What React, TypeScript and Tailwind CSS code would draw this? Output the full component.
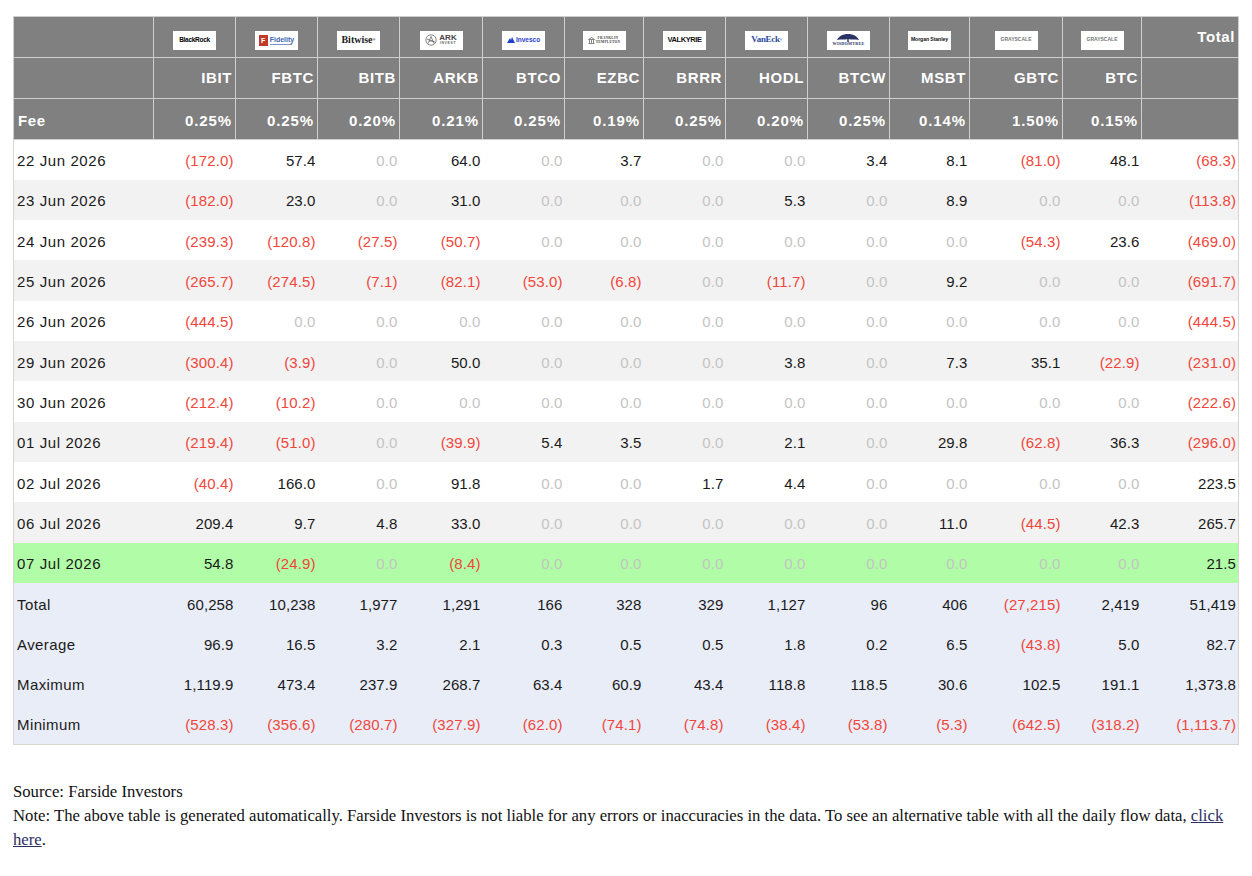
import React from "react";

type Cell = string;

const tickers = ["IBIT", "FBTC", "BITB", "ARKB", "BTCO", "EZBC", "BRRR", "HODL", "BTCW", "MSBT", "GBTC", "BTC"];
const fees = ["0.25%", "0.25%", "0.20%", "0.21%", "0.25%", "0.19%", "0.25%", "0.20%", "0.25%", "0.14%", "1.50%", "0.15%"];
const widths = ["w-[140px]", "w-[82px]", "w-[82px]", "w-[82px]", "w-[83px]", "w-[82px]", "w-[79px]", "w-[82px]", "w-[82px]", "w-[82px]", "w-[80px]", "w-[93px]", "w-[79px]", "w-[97px]"];

const Z = "0.0";
const rows: { date: string; vals: Cell[]; green?: boolean }[] = [
  { date: "22 Jun 2026", vals: ["(172.0)", "57.4", Z, "64.0", Z, "3.7", Z, Z, "3.4", "8.1", "(81.0)", "48.1", "(68.3)"] },
  { date: "23 Jun 2026", vals: ["(182.0)", "23.0", Z, "31.0", Z, Z, Z, "5.3", Z, "8.9", Z, Z, "(113.8)"] },
  { date: "24 Jun 2026", vals: ["(239.3)", "(120.8)", "(27.5)", "(50.7)", Z, Z, Z, Z, Z, Z, "(54.3)", "23.6", "(469.0)"] },
  { date: "25 Jun 2026", vals: ["(265.7)", "(274.5)", "(7.1)", "(82.1)", "(53.0)", "(6.8)", Z, "(11.7)", Z, "9.2", Z, Z, "(691.7)"] },
  { date: "26 Jun 2026", vals: ["(444.5)", Z, Z, Z, Z, Z, Z, Z, Z, Z, Z, Z, "(444.5)"] },
  { date: "29 Jun 2026", vals: ["(300.4)", "(3.9)", Z, "50.0", Z, Z, Z, "3.8", Z, "7.3", "35.1", "(22.9)", "(231.0)"] },
  { date: "30 Jun 2026", vals: ["(212.4)", "(10.2)", Z, Z, Z, Z, Z, Z, Z, Z, Z, Z, "(222.6)"] },
  { date: "01 Jul 2026", vals: ["(219.4)", "(51.0)", Z, "(39.9)", "5.4", "3.5", Z, "2.1", Z, "29.8", "(62.8)", "36.3", "(296.0)"] },
  { date: "02 Jul 2026", vals: ["(40.4)", "166.0", Z, "91.8", Z, Z, "1.7", "4.4", Z, Z, Z, Z, "223.5"] },
  { date: "06 Jul 2026", vals: ["209.4", "9.7", "4.8", "33.0", Z, Z, Z, Z, Z, "11.0", "(44.5)", "42.3", "265.7"] },
  { date: "07 Jul 2026", vals: ["54.8", "(24.9)", Z, "(8.4)", Z, Z, Z, Z, Z, Z, Z, Z, "21.5"], green: true },
];

const summary: { label: string; vals: Cell[] }[] = [
  { label: "Total", vals: ["60,258", "10,238", "1,977", "1,291", "166", "328", "329", "1,127", "96", "406", "(27,215)", "2,419", "51,419"] },
  { label: "Average", vals: ["96.9", "16.5", "3.2", "2.1", "0.3", "0.5", "0.5", "1.8", "0.2", "6.5", "(43.8)", "5.0", "82.7"] },
  { label: "Maximum", vals: ["1,119.9", "473.4", "237.9", "268.7", "63.4", "60.9", "43.4", "118.8", "118.5", "30.6", "102.5", "191.1", "1,373.8"] },
  { label: "Minimum", vals: ["(528.3)", "(356.6)", "(280.7)", "(327.9)", "(62.0)", "(74.1)", "(74.8)", "(38.4)", "(53.8)", "(5.3)", "(642.5)", "(318.2)", "(1,113.7)"] },
];

function colorFor(v: string, isTotalCol: boolean) {
  if (v.startsWith("(")) return "text-[#f0463b]";
  if (v === Z && !isTotalCol) return "text-[#c4c4c4]";
  return "text-[#1a1a1a]";
}

function LogoBox({ children }: { children: React.ReactNode }) {
  return (
    <div className="mx-auto flex h-[19px] w-[43px] items-center justify-center overflow-hidden bg-white">
      {children}
    </div>
  );
}

function Logo({ i }: { i: number }) {
  switch (i) {
    case 0:
      return (
        <LogoBox>
          <span className="text-[6.5px] font-bold tracking-[-0.3px] text-black [font-family:'Liberation_Sans',sans-serif]">BlackRock</span>
        </LogoBox>
      );
    case 1:
      return (
        <LogoBox>
          <div className="flex items-center gap-[2px]">
            <div className="flex h-[11px] w-[9px] items-center justify-center bg-[#c0392b] text-[7px] font-bold leading-none text-white">F</div>
            <div className="flex flex-col leading-none">
              <span className="text-[7px] font-bold text-[#3b66b0] [font-family:'Liberation_Sans',sans-serif]">Fidelity</span>
              <span className="mt-[1px] h-[1px] w-[22px] bg-[#7a95c4]" />
            </div>
          </div>
        </LogoBox>
      );
    case 2:
      return (
        <LogoBox>
          <span className="text-[10px] leading-none text-[#222] [font-family:'Liberation_Serif',serif]">Bitwise<sup className="text-[4px]">®</sup></span>
        </LogoBox>
      );
    case 3:
      return (
        <LogoBox>
          <div className="flex items-center gap-[2px]">
            <svg width="12" height="12" viewBox="0 0 12 12" fill="none" stroke="#666" strokeWidth="0.8">
              <circle cx="6" cy="6" r="5.2" />
              <path d="M3 9.5 L6 2.5 L9 9.5 M4 7 L8 7 M2 5 L10 8" />
            </svg>
            <div className="flex flex-col leading-none">
              <span className="text-[8px] font-bold leading-[8px] text-[#444] [font-family:'Liberation_Sans',sans-serif]">ARK</span>
              <span className="text-[3.5px] tracking-[0.6px] text-[#666]">INVEST</span>
            </div>
          </div>
        </LogoBox>
      );
    case 4:
      return (
        <LogoBox>
          <div className="flex items-center gap-[1px]">
            <svg width="8" height="6" viewBox="0 0 8 6">
              <path d="M0 6 L3 1 L4 3 L5 0 L8 6 Z" fill="#1f3fd1" />
            </svg>
            <span className="text-[6.5px] font-bold text-[#1f3fd1] [font-family:'Liberation_Sans',sans-serif]">Invesco</span>
          </div>
        </LogoBox>
      );
    case 5:
      return (
        <LogoBox>
          <div className="flex items-center gap-[1px]">
            <svg width="7" height="7" viewBox="0 0 7 7" fill="none" stroke="#555" strokeWidth="0.7">
              <path d="M0.5 6.5 H6.5 M1.5 6 V3 M3.5 6 V3 M5.5 6 V3 M0.5 2.5 L3.5 0.5 L6.5 2.5 Z" />
            </svg>
            <div className="flex flex-col leading-[4px] [font-family:'Liberation_Serif',serif]">
              <span className="text-[3.6px] tracking-[0.2px] text-[#444]">FRANKLIN</span>
              <span className="text-[3.6px] tracking-[0.2px] text-[#444]">TEMPLETON</span>
            </div>
          </div>
        </LogoBox>
      );
    case 6:
      return (
        <LogoBox>
          <span className="text-[7.5px] font-bold tracking-[-0.4px] text-[#111] [font-family:'Liberation_Sans',sans-serif]">VALKYRIE</span>
        </LogoBox>
      );
    case 7:
      return (
        <LogoBox>
          <span className="text-[9px] font-bold tracking-[-0.3px] text-[#2b4c9b] [font-family:'Liberation_Serif',serif]">VanEck<sup className="text-[3px]">®</sup></span>
        </LogoBox>
      );
    case 8:
      return (
        <LogoBox>
          <div className="flex flex-col items-center leading-none">
            <svg width="26" height="9" viewBox="0 0 26 9">
              <path d="M2 7 C4 3 8 1 13 1 C18 1 22 3 24 7 C20 6 17 7 13 6 C9 7 6 6 2 7 Z" fill="#2a3266" />
              <rect x="12.3" y="5" width="1.4" height="4" fill="#2a3266" />
            </svg>
            <span className="text-[4.2px] tracking-[0.2px] text-[#2a3266] [font-family:'Liberation_Serif',serif]">WISDOMTREE</span>
          </div>
        </LogoBox>
      );
    case 9:
      return (
        <LogoBox>
          <span className="text-[5.2px] tracking-[-0.1px] text-[#111] [font-family:'Liberation_Sans',sans-serif]">Morgan Stanley</span>
        </LogoBox>
      );
    default:
      return (
        <LogoBox>
          <span className="text-[5px] tracking-[0px] text-[#777] [font-family:'Liberation_Sans',sans-serif]">GRAYSCALE</span>
        </LogoBox>
      );
  }
}

export default function App() {
  const th = "border border-[#cfcfcf] bg-[#808080] text-white font-bold";
  return (
    <div className="min-h-[876px] bg-white px-[13px] pt-[16px] [font-family:'Liberation_Sans',Arial,sans-serif]">
      <table className="w-[1225px] table-fixed border-collapse border border-[#d9d6cf] text-[15px]">
        <colgroup>
          {widths.map((w, i) => (
            <col key={i} className={w} />
          ))}
        </colgroup>
        <thead>
          <tr className="h-[41px]">
            <th className={th} />
            {tickers.map((t, i) => (
              <th key={t} className={`${th} pt-[6px] align-middle`}>
                <Logo i={i} />
              </th>
            ))}
            <th className={`${th} pr-[3px] text-right tracking-[0.6px]`}>Total</th>
          </tr>
          <tr className="h-[41px]">
            <th className={th} />
            {tickers.map((t) => (
              <th key={t} className={`${th} pr-[3px] text-right tracking-[0.6px]`}>
                {t}
              </th>
            ))}
            <th className={th} />
          </tr>
          <tr className="h-[41px]">
            <th className={`${th} pl-[4px] pt-[4px] text-left tracking-[0.6px]`}>Fee</th>
            {fees.map((f, i) => (
              <th key={i} className={`${th} pr-[3px] pt-[4px] text-right tracking-[0.9px]`}>
                {f}
              </th>
            ))}
            <th className={th} />
          </tr>
        </thead>
        <tbody>
          {rows.map((r, ri) => (
            <tr
              key={r.date}
              className={`h-[40.33px] ${r.green ? "bg-[#b1fca6]" : ri % 2 === 1 ? "bg-[#f2f2f2]" : "bg-white"}`}
            >
              <td className="pl-[3px] pt-[3px] text-left tracking-[0.6px] text-[#1a1a1a]">{r.date}</td>
              {r.vals.map((v, i) => (
                <td key={i} className={`pr-[2px] pt-[3px] text-right tracking-[0.1px] ${colorFor(v, i === 12)}`}>
                  {v}
                </td>
              ))}
            </tr>
          ))}
          {summary.map((r) => (
            <tr key={r.label} className="h-[40.33px] bg-[#e9edf8]">
              <td className="pl-[3px] pt-[3px] text-left tracking-[0.4px] text-[#1a1a1a]">{r.label}</td>
              {r.vals.map((v, i) => (
                <td key={i} className={`pr-[2px] pt-[3px] text-right tracking-[0.1px] ${colorFor(v, true)}`}>
                  {v}
                </td>
              ))}
            </tr>
          ))}
        </tbody>
      </table>
      <div className="mt-[35px] w-[1225px] text-[16.7px] leading-[24px] text-[#111] [font-family:'Liberation_Serif','Times_New_Roman',serif]">
        <p>Source: Farside Investors</p>
        <p>
          Note: The above table is generated automatically. Farside Investors is not liable for any errors or
          inaccuracies in the data. To see an alternative table with all the daily flow data,{" "}
          <a href="#" className="text-[#2c2f63] underline">
            click
          </a>{" "}
          <a href="#" className="text-[#2c2f63] underline">
            here
          </a>
          .
        </p>
      </div>
    </div>
  );
}
